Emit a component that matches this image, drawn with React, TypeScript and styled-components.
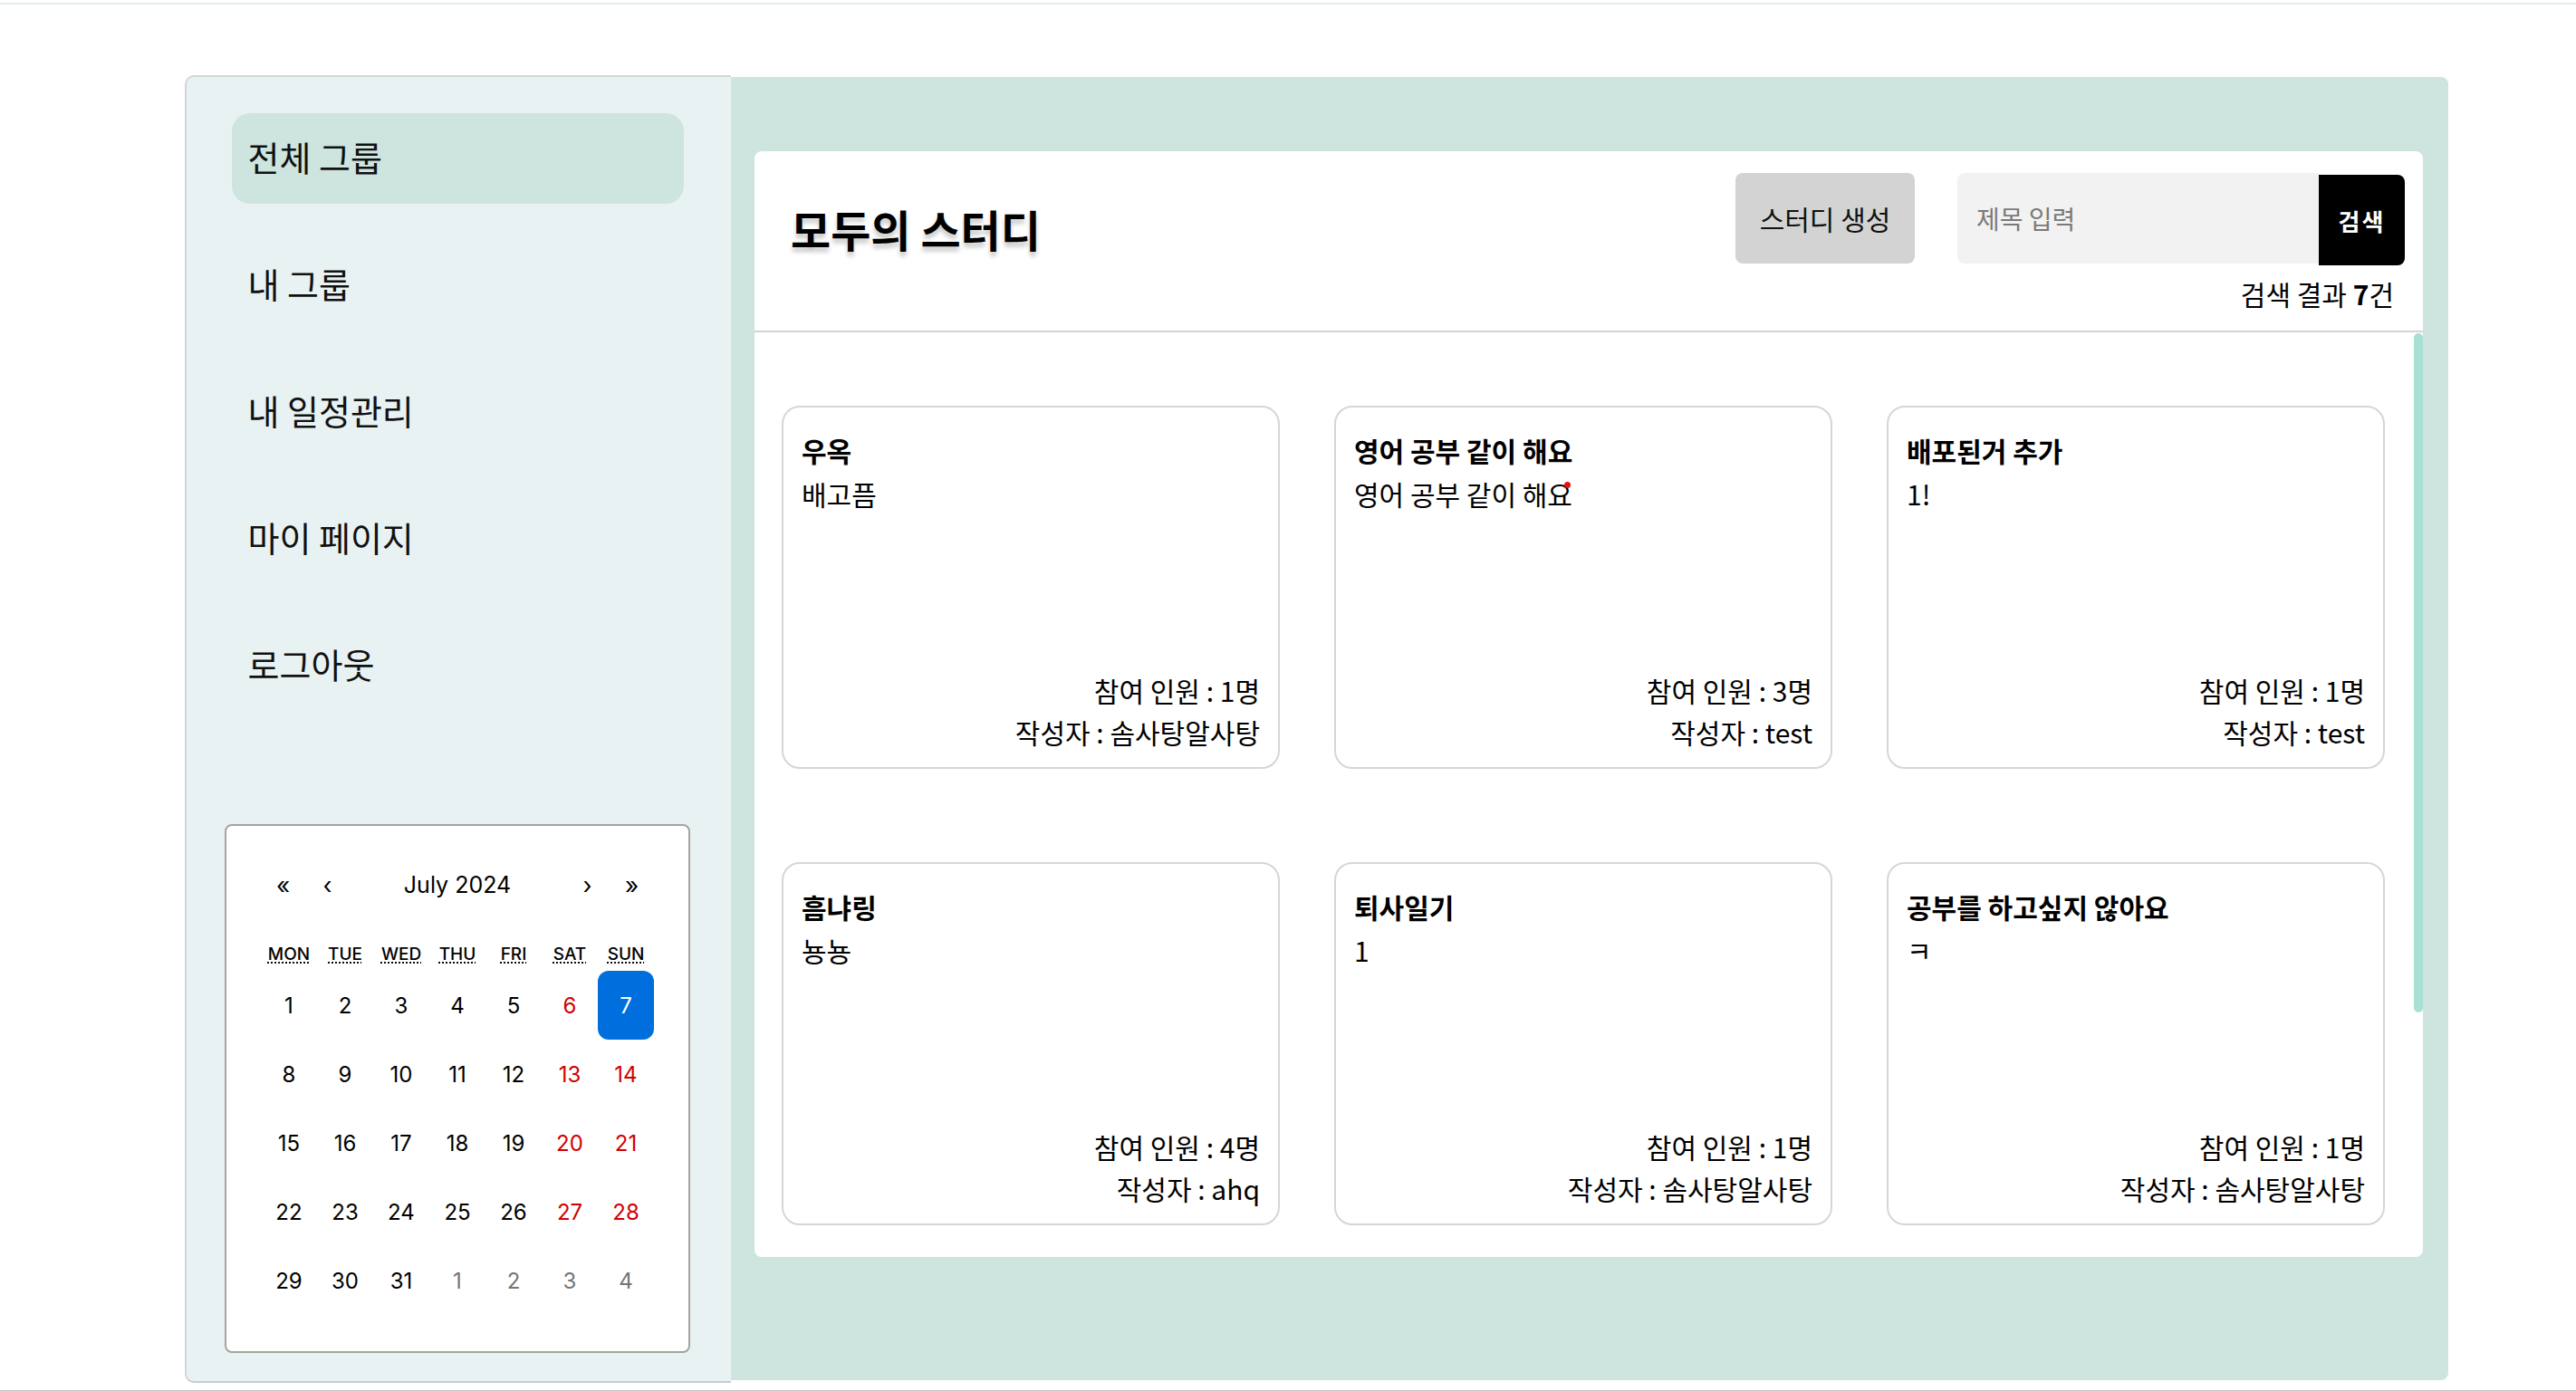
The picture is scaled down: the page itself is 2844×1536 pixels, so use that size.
import React from 'react';
import styled, { createGlobalStyle } from 'styled-components';

const GlobalStyle = createGlobalStyle`
  html, body {
    margin: 0;
    padding: 0;
    background: #fff;
  }
  body {
    font-family: 'Noto Sans CJK KR', 'Noto Sans', sans-serif;
    color: #000;
  }
  * { box-sizing: border-box; }
`;

interface Study {
  title: string;
  desc: string;
  members: number;
  author: string;
  marker?: boolean;
}

const studies: Study[] = [
  { title: '우옥', desc: '배고픔', members: 1, author: '솜사탕알사탕' },
  { title: '영어 공부 같이 해요', desc: '영어 공부 같이 해요', members: 3, author: 'test', marker: true },
  { title: '배포된거 추가', desc: '1!', members: 1, author: 'test' },
  { title: '흠냐링', desc: '뇽뇽', members: 4, author: 'ahq' },
  { title: '퇴사일기', desc: '1', members: 1, author: '솜사탕알사탕' },
  { title: '공부를 하고싶지 않아요', desc: 'ㅋ', members: 1, author: '솜사탕알사탕' },
];

const menu = ['전체 그룹', '내 그룹', '내 일정관리', '마이 페이지', '로그아웃'];
const weekdays = [
  ['MON', 'Monday'],
  ['TUE', 'Tuesday'],
  ['WED', 'Wednesday'],
  ['THU', 'Thursday'],
  ['FRI', 'Friday'],
  ['SAT', 'Saturday'],
  ['SUN', 'Sunday'],
];

const Page = styled.div`
  width: 2844px;
  height: 1536px;
  display: flex;
  flex-direction: column;
  overflow: hidden;
`;

const TopLine = styled.div`
  height: 5px;
  flex-shrink: 0;
  border-bottom: 2px solid #e2eded;
`;

const BottomLine = styled.div`
  margin-top: auto;
  height: 1px;
  flex-shrink: 0;
  background: #c6c6c6;
`;

const Layout = styled.div`
  display: flex;
  align-items: flex-start;
  margin: 78px 0 0 204px;
  width: 2499px;
`;

const Sidebar = styled.aside`
  width: 603px;
  height: 1444px;
  flex-shrink: 0;
  display: flex;
  flex-direction: column;
  align-items: center;
  padding: 40px 3px 0 0;
  background: #e9f2f3;
  border: 2px solid #d3d6d6;
  border-right: none;
  border-bottom-color: #c9cbcb;
  border-radius: 10px 0 0 10px;
`;

const Nav = styled.nav`
  display: flex;
  flex-direction: column;
  gap: 40px;
`;

const NavItem = styled.div<{ $active?: boolean }>`
  width: 499px;
  height: 100px;
  display: flex;
  align-items: center;
  padding: 0 0 5px 18px;
  border-radius: 20px;
  font-size: 38px;
  color: #111;
  background: ${(p) => (p.$active ? '#cde4df' : 'transparent')};
  cursor: pointer;
`;

const CalendarBox = styled.div`
  margin-top: 125px;
  width: 514px;
  height: 584px;
  padding: 35px 38px 0;
  background: #fff;
  border: 2px solid #a3a59e;
  border-radius: 8px;
  font-family: Inter, 'Noto Sans', sans-serif;
`;

const CalNav = styled.div`
  display: flex;
  align-items: center;
  height: 60px;
  margin-bottom: 28px;
`;

const CalArrow = styled.button`
  width: 49px;
  height: 60px;
  padding: 0;
  border: none;
  background: none;
  font-family: inherit;
  font-size: 26px;
  color: #000;
`;

const CalLabel = styled.div`
  flex: 1;
  text-align: center;
  font-size: 25px;
`;

const Weekdays = styled.div`
  display: grid;
  grid-template-columns: repeat(7, 62px);
  height: 37px;
  align-items: center;
  text-align: center;
  font-size: 19px;
  font-weight: 500;

  abbr {
    text-decoration: underline dotted;
    text-underline-offset: 3px;
  }
`;

const Days = styled.div`
  display: grid;
  grid-template-columns: repeat(7, 62px);
  grid-auto-rows: 76px;
`;

const Day = styled.div<{ $tone: 'normal' | 'weekend' | 'other'; $active?: boolean }>`
  display: flex;
  align-items: center;
  justify-content: center;
  border-radius: 12px;
  font-size: 24px;
  background: ${(p) => (p.$active ? '#006edc' : 'transparent')};
  color: ${(p) =>
    p.$active ? '#fff' : p.$tone === 'weekend' ? '#d10000' : p.$tone === 'other' ? '#757575' : '#000'};
`;

const Main = styled.main`
  width: 1896px;
  height: 1439px;
  margin-top: 2px;
  padding: 82px 28px 0 26px;
  background: #cde4df;
  border-radius: 0 8px 8px 0;
`;

const Panel = styled.section`
  height: 1221px;
  display: flex;
  flex-direction: column;
  background: #fff;
  border-radius: 8px;
  overflow: hidden;
`;

const Header = styled.header`
  height: 200px;
  flex-shrink: 0;
  display: flex;
  justify-content: space-between;
  align-items: flex-start;
  padding: 24px 20px 0 40px;
  border-bottom: 2px solid #d3d3d3;
`;

const Title = styled.h1`
  margin: 0;
  padding-top: 28px;
  font-size: 48px;
  line-height: 66px;
  font-weight: 700;
  text-shadow: 0 5px 5px rgba(0, 0, 0, 0.22);
`;

const Actions = styled.div`
  display: flex;
  flex-direction: column;
  align-items: flex-end;
`;

const ActionRow = styled.div`
  display: flex;
  align-items: flex-start;
`;

const CreateButton = styled.button`
  width: 198px;
  height: 100px;
  margin-right: 47px;
  border: none;
  border-radius: 8px;
  background: #d3d3d3;
  font-family: inherit;
  font-size: 30px;
  color: #111;
`;

const SearchInput = styled.input`
  width: 399px;
  height: 100px;
  padding: 0 0 0 21px;
  border: none;
  outline: none;
  border-radius: 8px 0 0 8px;
  background: #f2f2f2;
  font-family: inherit;
  font-size: 28px;

  &::placeholder {
    color: #7a7a7a;
  }
`;

const SearchButton = styled.button`
  width: 95px;
  height: 100px;
  margin-top: 2px;
  border: none;
  border-radius: 0 8px 8px 0;
  background: #000;
  color: #fff;
  font-family: inherit;
  font-size: 26px;
  font-weight: 700;
  letter-spacing: 2px;
`;

const ResultCount = styled.div`
  margin: 9px 12px 0 0;
  font-size: 30px;
  line-height: 44px;

  b {
    font-weight: 700;
  }
`;

const List = styled.div`
  position: relative;
  flex: 1;
  overflow: hidden;
  padding: 81px 42px 40px 30px;
`;

const ScrollThumb = styled.div`
  position: absolute;
  top: 1px;
  right: 0;
  width: 10px;
  height: 750px;
  border-radius: 5px;
  background: #a8e0d4;
`;

const CardGrid = styled.div`
  display: grid;
  grid-template-columns: repeat(3, 1fr);
  column-gap: 60px;
  row-gap: 103px;
`;

const Card = styled.article`
  position: relative;
  height: 401px;
  display: flex;
  flex-direction: column;
  justify-content: space-between;
  padding: 23px 20px 16px;
  border: 2px solid #d6d6d6;
  border-radius: 20px;
  font-size: 30px;
`;

const CardTitle = styled.div`
  font-weight: 700;
  line-height: 48px;
`;

const CardDesc = styled.div`
  line-height: 48px;
`;

const CardMeta = styled.div`
  text-align: right;
  line-height: 46px;
`;

const Marker = styled.span`
  position: absolute;
  left: 252px;
  top: 82px;
  width: 7px;
  height: 7px;
  border-radius: 50%;
  background: #e81010;
`;

const buildDays = () => {
  const cells: { n: number; other: boolean; col: number }[] = [];
  for (let d = 1; d <= 31; d++) cells.push({ n: d, other: false, col: (d - 1) % 7 });
  for (let d = 1; d <= 4; d++) cells.push({ n: d, other: true, col: (31 + d - 1) % 7 });
  return cells;
};

const MiniCalendar = () => (
  <CalendarBox>
    <CalNav>
      <CalArrow>«</CalArrow>
      <CalArrow>‹</CalArrow>
      <CalLabel>July 2024</CalLabel>
      <CalArrow>›</CalArrow>
      <CalArrow>»</CalArrow>
    </CalNav>
    <Weekdays>
      {weekdays.map(([short, full]) => (
        <div key={short}>
          <abbr title={full}>{short}</abbr>
        </div>
      ))}
    </Weekdays>
    <Days>
      {buildDays().map((c, i) => (
        <Day
          key={i}
          $active={!c.other && c.n === 7}
          $tone={c.other ? 'other' : c.col >= 5 ? 'weekend' : 'normal'}
        >
          {c.n}
        </Day>
      ))}
    </Days>
  </CalendarBox>
);

const App = () => (
  <>
    <GlobalStyle />
    <Page>
      <TopLine />
      <Layout>
        <Sidebar>
          <Nav>
            {menu.map((m, i) => (
              <NavItem key={m} $active={i === 0}>
                {m}
              </NavItem>
            ))}
          </Nav>
          <MiniCalendar />
        </Sidebar>

        <Main>
          <Panel>
            <Header>
              <Title>모두의 스터디</Title>
              <Actions>
                <ActionRow>
                  <CreateButton>스터디 생성</CreateButton>
                  <SearchInput placeholder="제목 입력" />
                  <SearchButton>검색</SearchButton>
                </ActionRow>
                <ResultCount>
                  검색 결과 <b>7</b>건
                </ResultCount>
              </Actions>
            </Header>

            <List>
              <ScrollThumb />
              <CardGrid>
                {studies.map((s) => (
                  <Card key={s.title}>
                    <div>
                      <CardTitle>{s.title}</CardTitle>
                      <CardDesc>{s.desc}</CardDesc>
                    </div>
                    <div>
                      <CardMeta>참여 인원 : {s.members}명</CardMeta>
                      <CardMeta>작성자 : {s.author}</CardMeta>
                    </div>
                    {s.marker && <Marker />}
                  </Card>
                ))}
              </CardGrid>
            </List>
          </Panel>
        </Main>
      </Layout>
      <BottomLine />
    </Page>
  </>
);

export default App;
